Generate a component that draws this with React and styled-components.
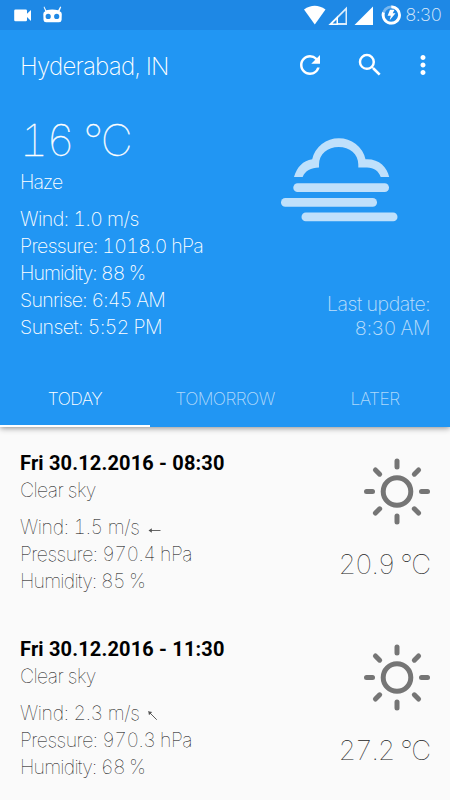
import React from 'react';
import styled, { createGlobalStyle } from 'styled-components';
import { MdRefresh, MdSearch, MdMoreVert } from 'react-icons/md';

const GlobalStyle = createGlobalStyle`
    * {
        box-sizing: border-box;
    }

    body {
        margin: 0;
        background: #fafafa;
        font-family: Inter, "Liberation Sans", sans-serif;
        font-weight: 200;
        font-variant-numeric: tabular-nums;
    }

    svg {
        display: block;
        flex: none;
    }
`;

const Screen = styled.div`
    width: 450px;
    height: 800px;
    overflow: hidden;
    background: #fafafa;
`;

const Header = styled.header`
    display: flex;
    flex-direction: column;
    height: 427px;
    background: #2196f3;
    color: #fff;
    box-shadow: 0 1px 6px rgba(0, 0, 0, 0.45);
`;

const StatusBar = styled.div`
    display: flex;
    justify-content: space-between;
    height: 30px;
    padding: 0 9px 0 14px;
    background: #1e88e5;
`;

const StatusGroup = styled.div`
    display: flex;
    align-items: center;
`;

const Clock = styled.span`
    width: 36px;
    margin-left: 4px;
    font-size: 18px;
    line-height: 32px;
    letter-spacing: -0.9px;
    white-space: nowrap;
    opacity: 0.85;
`;

const Toolbar = styled.div`
    display: flex;
    align-items: center;
    justify-content: space-between;
    height: 72px;
    padding: 0 12px 0 20px;
`;

const City = styled.h1`
    margin: 0;
    font-size: 24px;
    font-weight: 200;
    letter-spacing: -0.75px;
`;

const Actions = styled.div`
    display: flex;
    align-items: center;
    gap: 30px;
    margin-top: -2px;

    svg:last-child {
        margin-left: -7px;
    }
`;

const Current = styled.section`
    display: flex;
    flex: 1;
    justify-content: space-between;
    padding: 12px 20px 0;
`;

const Temperature = styled.div`
    font-size: 44px;
    line-height: 53px;
    letter-spacing: -1.8px;
    font-weight: 100;
    -webkit-text-stroke: 0.3px #fff;
`;

const Line = styled.div`
    font-size: 19.5px;
    line-height: 27px;
    letter-spacing: ${props => props.$spacing || '-0.5px'};
    white-space: nowrap;
`;

const Summary = styled(Line)`
    margin-top: 2px;
    letter-spacing: -1px;
`;

const Details = styled.div`
    margin-top: 10px;
`;

const CurrentSide = styled.div`
    display: flex;
    flex-direction: column;
    align-items: flex-end;
    padding-top: 24px;
`;

const HazeBox = styled.div`
    padding-right: 32px;
`;

const Updated = styled.div`
    margin-top: 70px;
    font-size: 19.5px;
    line-height: 24px;
    letter-spacing: -0.45px;
    text-align: right;
    opacity: 0.7;
`;

const Tabs = styled.nav`
    display: flex;
    height: 57px;
`;

const Tab = styled.div`
    flex: 1;
    padding-top: 3px;
    border-bottom: 2px solid ${props => (props.$active ? '#fff' : 'transparent')};
    color: ${props => (props.$active ? '#fff' : 'rgba(255, 255, 255, 0.65)')};
    font-size: 17.5px;
    line-height: 51px;
    letter-spacing: -0.6px;
    text-align: center;
`;

const List = styled.main`
    display: flex;
    flex-direction: column;
    padding: 23px 20px 0;
`;

const Item = styled.article`
    display: flex;
    justify-content: space-between;
    height: 186px;
    color: #000;
    font-weight: 100;
`;

const DateLine = styled.div`
    color: #000;
    font-family: Roboto, sans-serif;
    font-size: 20px;
    font-weight: 700;
    line-height: 27px;
    letter-spacing: 0.16px;
    white-space: nowrap;
`;

const ItemSide = styled.div`
    display: flex;
    flex-direction: column;
    align-items: flex-end;
    padding-top: 8px;
`;

const ItemTemp = styled.div`
    margin-top: 22px;
    color: #222;
    font-size: 27.5px;
    line-height: 34px;
    letter-spacing: -1.2px;
`;

const Arrow = styled.svg`
    display: inline-block;
    margin-left: ${props => (props.$angle ? '7px' : '9px')};
    vertical-align: ${props => (props.$angle ? '-2px' : '-3px')};
    transform: rotate(${props => props.$angle}deg);
`;

const current = [
    { text: 'Wind: 1.0 m/s', spacing: '-0.5px' },
    { text: 'Pressure: 1018.0 hPa', spacing: '-0.65px' },
    { text: 'Humidity: 88 %', spacing: '-0.9px' },
    { text: 'Sunrise: 6:45 AM', spacing: '-0.7px' },
    { text: 'Sunset: 5:52 PM', spacing: '-0.5px' },
];

const forecast = [
    { date: 'Fri 30.12.2016 - 08:30', wind: '1.5', angle: 0, pressure: '970.4', humidity: 85, temp: '20.9' },
    { date: 'Fri 30.12.2016 - 11:30', wind: '2.3', angle: 45, pressure: '970.3', humidity: 68, temp: '27.2' },
];

function NotificationIcons() {
    return (
        <svg width="50" height="30" viewBox="14 0 50 30" fill="#fff">
            <path d="M15.5 9.5h10.300q1.200 0 1.200 1.200v3l4-3.800v11l-4-3.800v3q0 1.200-1.200 1.200H15.500q-1.300 0-1.300-1.200v-9.400q0-1.200 1.300-1.200z" />
            <path fillRule="evenodd" d="M44.300 6.500l1.900 3.700q6-1.200 12 0l2-3.700 1 .6-1.600 4.200q2.200.8 2.200 2.800l-.2 6q-.3 2.200-2.500 2.200H46q-2.200 0-2.500-2.200l-.2-6q0-2 2-2.800l-1.700-4.200zM48.200 13.800a2.600 2.600 0 1 0 0 5.200 2.600 2.600 0 0 0 0-5.200zM56.700 13.800a2.600 2.600 0 1 0 0 5.200 2.600 2.600 0 0 0 0-5.200z" />
        </svg>
    );
}

function SystemIcons() {
    return (
        <svg width="98" height="30" viewBox="303 0 98 30" fill="#fff">
            <path d="M304 9.500Q314.800 2 325.500 9.500L314.800 24.500z" />
            <path fillRule="evenodd" d="M347 6.500V25H328.500zM345.500 10.500L337.500 18.500V23H345.500z" fillOpacity="0.85" />
            <path d="M338 15.500V25H328.500z" fill="#1e88e5" />
            <path fillRule="evenodd" d="M338 15.500V25H328.500zM336.500 19.500L332.500 23.500H336.500z" />
            <path d="M373 6.500V25H354.500z" />
            <circle cx="391.300" cy="15" r="8.200" fill="none" stroke="#fff" strokeOpacity="0.4" strokeWidth="2.800" />
            <path d="M391.300 6.800A8.200 8.200 0 1 1 383.500 12.500" fill="none" stroke="#fff" strokeWidth="2.800" />
            <path d="M390 9.800h4.500l-1.800 3.500h2.800l-5.800 7 1.100-4.600h-3.200z" />
        </svg>
    );
}

function HazeIcon() {
    return (
        <svg width="117" height="84" viewBox="0 0 117 84" fill="#bfe0fb">
            <path d="M13 39C16 29 22 22.500 31.200 21.200A27.400 27.400 0 0 1 84.500 21.200C98 20.500 106 29 108.200 39H99.700C97.500 33 93 29.500 86 29.500H77.300V26.500C77.300 16 68.500 9 57.700 9S38 16 38 26.500V29.500C30 29.500 24 33 21.700 39z" />
            <rect x="12.300" y="45.300" width="95.700" height="8.700" rx="4.300" />
            <rect x="0" y="60" width="96" height="8.700" rx="4.300" />
            <rect x="20.500" y="74.600" width="96" height="8.600" rx="4.300" />
        </svg>
    );
}

function SunIcon() {
    return (
        <svg width="67" height="67" viewBox="-34 -33.500 67 67" fill="none" stroke="#757575" strokeWidth="5">
            <circle r="13.800" />
            {[0, 45, 90, 135, 180, 225, 270, 315].map(a => (
                <path key={a} d="M0 -24.500V-30.500" strokeLinecap="round" transform={`rotate(${a})`} />
            ))}
        </svg>
    );
}

function WindArrow({ angle }) {
    return (
        <Arrow $angle={angle} width="13" height="13" viewBox="0 0 13 13" fill="none" stroke="#555" strokeWidth="0.9">
            <path d="M1 6.500H12.500" />
            <path d="M3.800 4.200L0.500 6.500L3.800 8.800z" fill="#555" stroke="none" />
        </Arrow>
    );
}

function ForecastItem({ item }) {
    return (
        <Item>
            <div>
                <DateLine>{item.date}</DateLine>
                <Line $spacing="-0.6px">Clear sky</Line>
                <Details>
                    <Line $spacing="-0.35px">Wind: {item.wind} m/s<WindArrow angle={item.angle} /></Line>
                    <Line $spacing="-0.5px">Pressure: {item.pressure} hPa</Line>
                    <Line $spacing="-0.75px">Humidity: {item.humidity} %</Line>
                </Details>
            </div>
            <ItemSide>
                <SunIcon />
                <ItemTemp>{item.temp} °C</ItemTemp>
            </ItemSide>
        </Item>
    );
}

export default function App() {
    return (
        <Screen>
            <GlobalStyle />
            <Header>
                <StatusBar>
                    <StatusGroup>
                        <NotificationIcons />
                    </StatusGroup>
                    <StatusGroup>
                        <SystemIcons />
                        <Clock>8:30</Clock>
                    </StatusGroup>
                </StatusBar>
                <Toolbar>
                    <City>Hyderabad, IN</City>
                    <Actions>
                        <MdRefresh size={30} />
                        <MdSearch size={30} />
                        <MdMoreVert size={30} />
                    </Actions>
                </Toolbar>
                <Current>
                    <div>
                        <Temperature>16 °C</Temperature>
                        <Summary>Haze</Summary>
                        <Details>
                            {current.map(row => (
                                <Line key={row.text} $spacing={row.spacing}>{row.text}</Line>
                            ))}
                        </Details>
                    </div>
                    <CurrentSide>
                        <HazeBox>
                            <HazeIcon />
                        </HazeBox>
                        <Updated>
                            Last update:
                            <br />
                            8:30 AM
                        </Updated>
                    </CurrentSide>
                </Current>
                <Tabs>
                    <Tab $active>TODAY</Tab>
                    <Tab>TOMORROW</Tab>
                    <Tab>LATER</Tab>
                </Tabs>
            </Header>
            <List>
                {forecast.map(item => (
                    <ForecastItem key={item.date} item={item} />
                ))}
            </List>
        </Screen>
    );
}
